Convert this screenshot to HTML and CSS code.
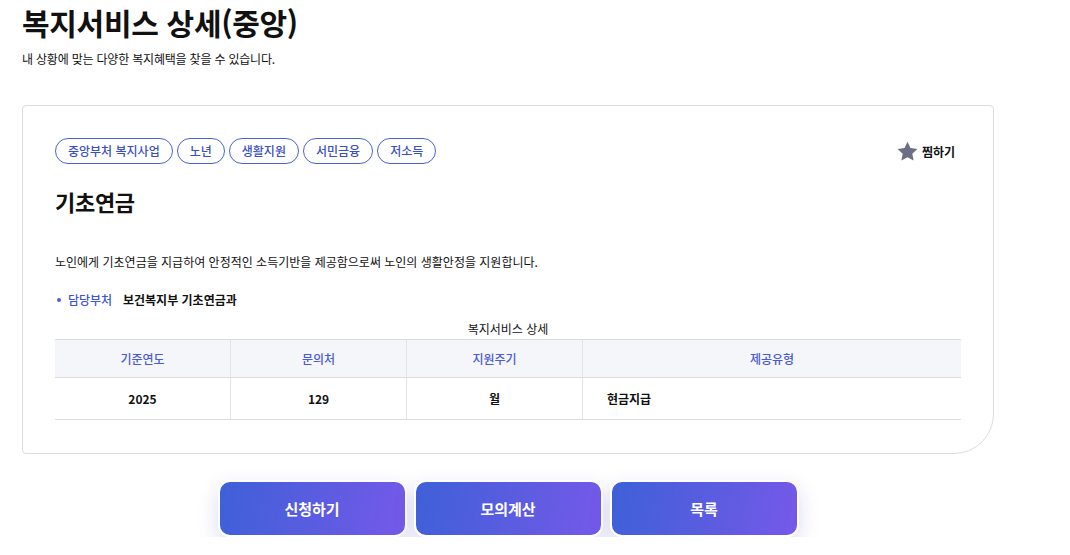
FILE: index.html
```html
<!DOCTYPE html>
<html lang="ko">
<head>
    <meta charset="UTF-8">
    <meta name="viewport" content="width=device-width, initial-scale=1.0">
    <title>복지서비스 상세(중앙)</title>
    <link rel="stylesheet" href="styles.css">
</head>
<body>
    <div class="page">
        <h1 class="page-title">복지서비스 상세(중앙)</h1>
        <p class="page-desc">내 상황에 맞는 다양한 복지혜택을 찾을 수 있습니다.</p>

        <section class="detail-card">
            <div class="card-top">
                <ul class="tags">
                    <li>중앙부처 복지사업</li>
                    <li>노년</li>
                    <li>생활지원</li>
                    <li>서민금융</li>
                    <li>저소득</li>
                </ul>
                <button class="bookmark">
                    <svg width="23" height="23" viewBox="0 0 24 24"><path d="M12 1.8l3.1 6.6 7.2.9-5.3 5 1.4 7.1L12 17.9l-6.4 3.5L7 14.3l-5.3-5 7.2-.9z" fill="#6b6e85"/></svg>
                    찜하기
                </button>
            </div>

            <h2 class="service-name">기초연금</h2>
            <p class="service-desc">노인에게 기초연금을 지급하여 안정적인 소득기반을 제공함으로써 노인의 생활안정을 지원합니다.</p>

            <ul class="info-list">
                <li><span class="info-label">담당부처</span><span class="info-value">보건복지부 기초연금과</span></li>
            </ul>

            <table class="detail-table">
                <caption>복지서비스 상세</caption>
                <thead>
                    <tr>
                        <th>기준연도</th>
                        <th>문의처</th>
                        <th>지원주기</th>
                        <th class="wide">제공유형</th>
                    </tr>
                </thead>
                <tbody>
                    <tr>
                        <td>2025</td>
                        <td>129</td>
                        <td>월</td>
                        <td class="left">현금지급</td>
                    </tr>
                </tbody>
            </table>
        </section>

        <div class="actions">
            <button class="action-btn">신청하기</button>
            <button class="action-btn">모의계산</button>
            <button class="action-btn">목록</button>
        </div>
    </div>
</body>
</html>
```

FILE: styles.css
```css
body { margin: 0; padding: 0; background: #fff; color: #111; font-family: "Noto Sans CJK KR", "Noto Sans", sans-serif; }
.page { width: 972px; padding: 4px 22px 0; }
.page-title { margin: 0; font-size: 30px; line-height: 36px; font-weight: 700; letter-spacing: -0.3px; }
.page-desc { margin: 10px 0 0; font-size: 12px; line-height: 18px; letter-spacing: -0.2px; }

.detail-card { margin-top: 37px; border: 1px solid #dcdde2; border-radius: 4px 4px 40px 4px; padding: 32px 32px 33px; }
.card-top { display: flex; justify-content: space-between; align-items: center; }
.tags { display: flex; gap: 4px; list-style: none; margin: 0; padding: 0; }
.tags li { border: 1px solid #4a62d8; border-radius: 14px; padding: 0 12px; font-size: 12px; line-height: 24px; color: #3a4fc2; font-weight: 500; }
.bookmark { display: flex; align-items: center; gap: 3px; background: none; border: none; padding: 0; margin-right: 6px; font-family: inherit; font-size: 12px; font-weight: 700; color: #111; cursor: pointer; }

.service-name { margin: 22px 0 0; font-size: 22px; line-height: 30px; font-weight: 700; letter-spacing: -0.3px; }
.service-desc { margin: 36px 0 0; font-size: 12px; line-height: 20px; }

.info-list { list-style: none; margin: 18px 0 0; padding: 0; }
.info-list li { display: flex; align-items: center; font-size: 12px; line-height: 20px; }
.info-list li::before { content: ""; width: 4px; height: 4px; border-radius: 50%; background: #4a62d8; margin: 0 7px 0 2px; }
.info-label { color: #3b55d6; font-weight: 500; width: 55px; }
.info-value { font-weight: 700; }

.detail-table { width: 100%; margin-top: 10px; border-collapse: collapse; table-layout: fixed; font-size: 12px; }
.detail-table caption { font-size: 12px; line-height: 18px; padding-bottom: 1px; }
.detail-table th { background: #f5f6fa; color: #4a5ad8; font-weight: 500; height: 37px; padding: 0; border-top: 1px solid #dcdde3; border-bottom: 1px solid #dcdde3; border-left: 1px solid #e3e4e8; width: 175px; }
.detail-table th:first-child, .detail-table td:first-child { border-left: none; }
.detail-table th.wide { width: auto; }
.detail-table td { height: 41px; padding: 0; text-align: center; font-weight: 700; border-bottom: 1px solid #dcdde3; border-left: 1px solid #e3e4e8; }
.detail-table td.left { text-align: left; padding-left: 24px; }

.actions { display: flex; justify-content: center; gap: 7px; margin-top: 26px; }
.action-btn { width: 189px; height: 57px; border: 2px solid #fff; border-radius: 12px; background: linear-gradient(100deg, #3e60d8 0%, #7559e8 100%); color: #fff; font-family: inherit; font-size: 15px; font-weight: 700; box-shadow: 0 8px 20px rgba(90, 90, 200, 0.22); cursor: pointer; }
```
